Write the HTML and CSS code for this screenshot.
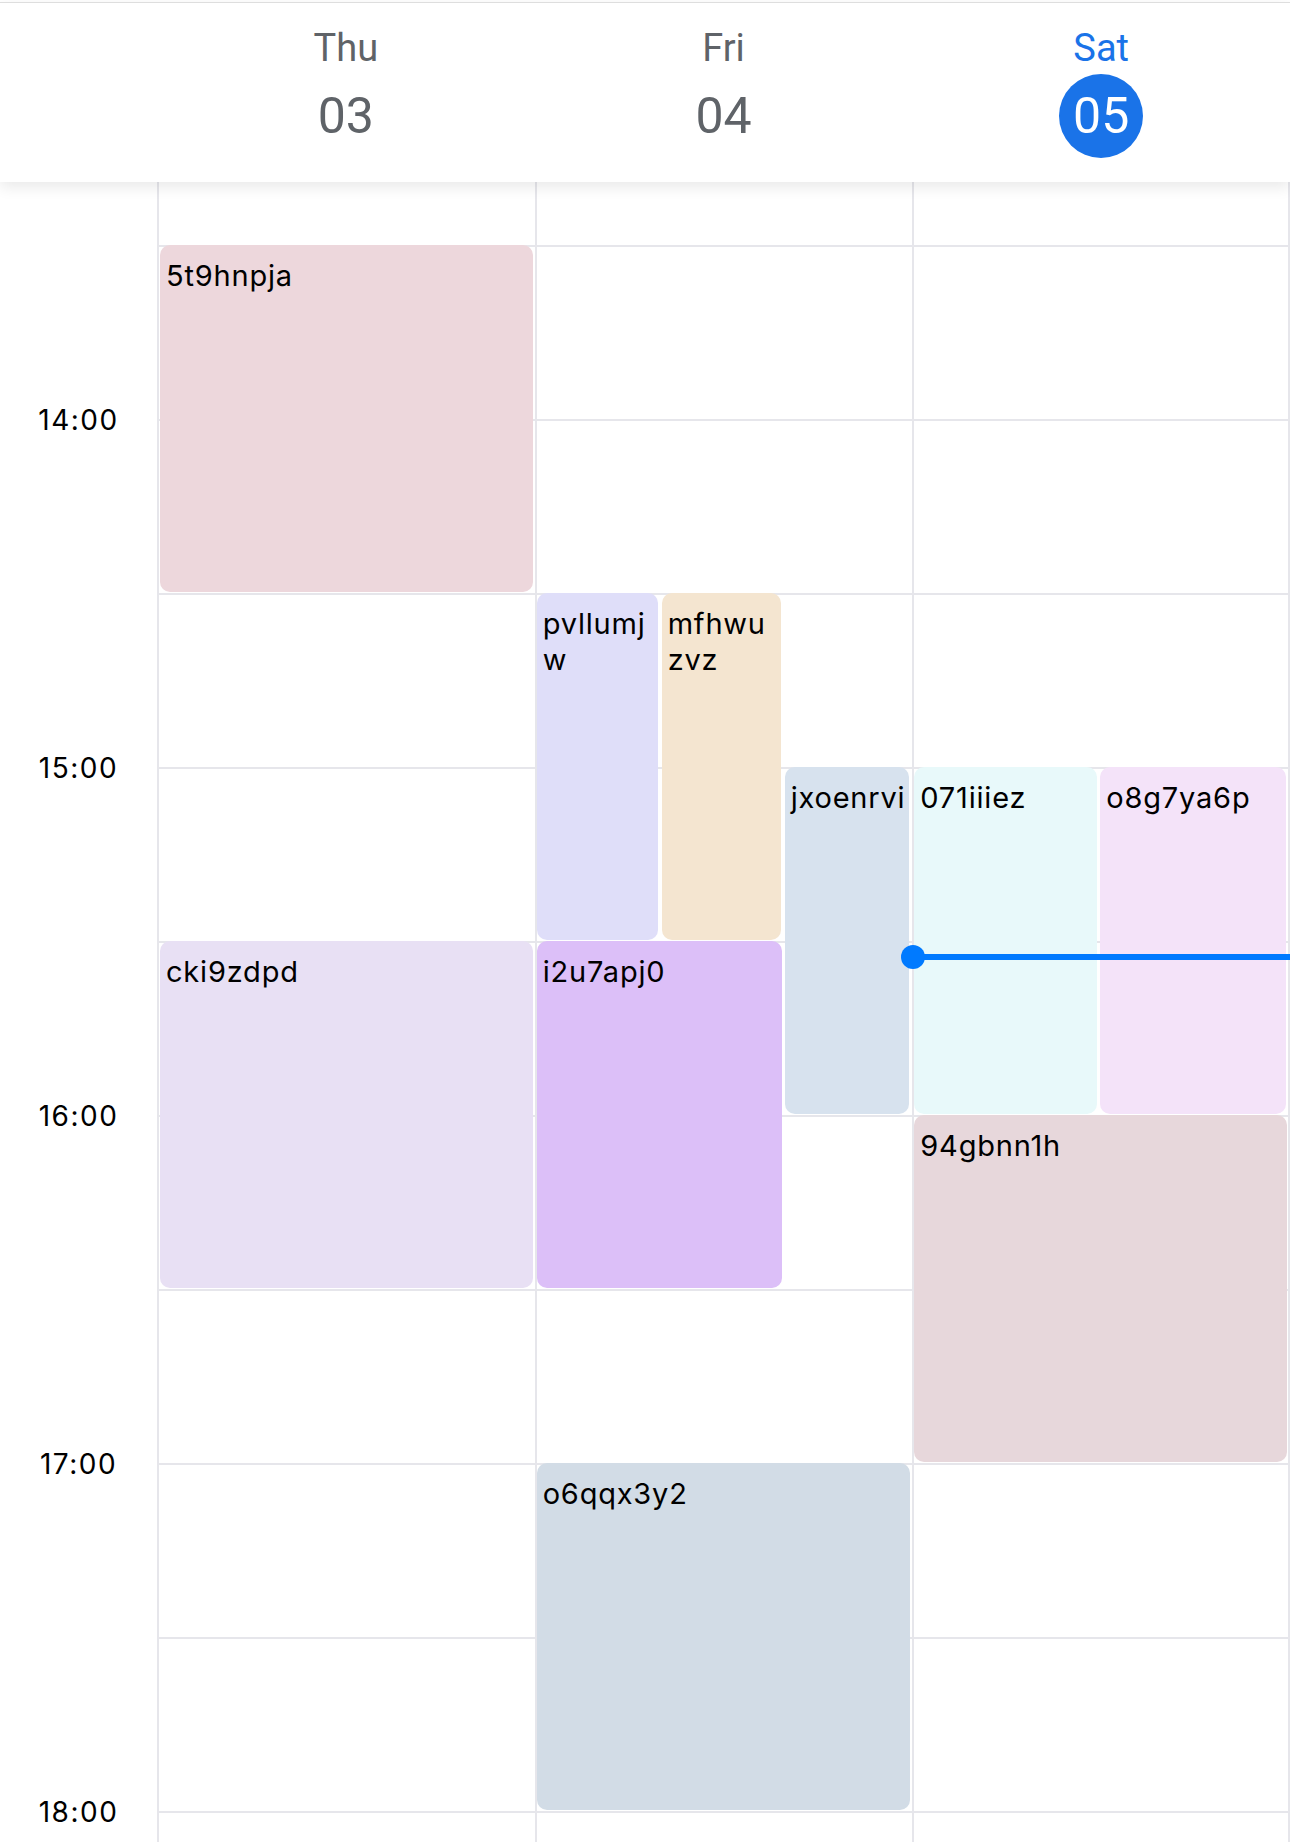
FILE: index.html
```html
<!DOCTYPE html>
<html lang="en">
<head>
    <meta charset="UTF-8">
    <meta name="viewport" content="width=device-width, initial-scale=1.0">
    <title>Week view</title>
    <link rel="stylesheet" href="styles.css">
</head>
<body>
    <div class="app">
        <!-- Day header -->
        <div class="week-header">
            <div class="gutter-head"></div>
            <div class="day-head">
                <div class="day-name">Thu</div>
                <div class="day-date">03</div>
            </div>
            <div class="day-head">
                <div class="day-name">Fri</div>
                <div class="day-date">04</div>
            </div>
            <div class="day-head today">
                <div class="day-name">Sat</div>
                <div class="day-date">05</div>
            </div>
        </div>

        <!-- Time grid -->
        <div class="week-body">
            <div class="time-gutter">
                <div class="time-label">14:00</div>
                <div class="time-label">15:00</div>
                <div class="time-label">16:00</div>
                <div class="time-label">17:00</div>
                <div class="time-label">18:00</div>
            </div>

            <div class="day-col">
                <div class="slot"></div><div class="slot"></div><div class="slot"></div><div class="slot"></div><div class="slot"></div>
                <div class="slot"></div><div class="slot"></div><div class="slot"></div><div class="slot"></div><div class="slot"></div>

                <div class="event ev-pink" style="top: 63px; height: 347px; left: 1px; width: 373px;">5t9hnpja</div>
                <div class="event ev-lilac" style="top: 759px; height: 347px; left: 1px; width: 373px;">cki9zdpd</div>
            </div>

            <div class="day-col">
                <div class="slot"></div><div class="slot"></div><div class="slot"></div><div class="slot"></div><div class="slot"></div>
                <div class="slot"></div><div class="slot"></div><div class="slot"></div><div class="slot"></div><div class="slot"></div>

                <div class="event ev-periwinkle" style="top: 411px; height: 347px; left: 0; width: 121px;">pvllumj<wbr>w</div>
                <div class="event ev-sand" style="top: 411px; height: 347px; left: 125px; width: 119px;">mfhwu<wbr>zvz</div>
                <div class="event ev-steel" style="top: 585px; height: 347px; left: 248px; width: 124px;">jxoenrvi</div>
                <div class="event ev-violet" style="top: 759px; height: 347px; left: 0; width: 245px;">i2u7apj0</div>
                <div class="event ev-slate" style="top: 1281px; height: 347px; left: 0; width: 373px;">o6qqx3y2</div>
            </div>

            <div class="day-col last">
                <div class="slot"></div><div class="slot"></div><div class="slot"></div><div class="slot"></div><div class="slot"></div>
                <div class="slot"></div><div class="slot"></div><div class="slot"></div><div class="slot"></div><div class="slot"></div>

                <div class="event ev-mint" style="top: 585px; height: 347px; left: 0; width: 183px;">071iiiez</div>
                <div class="event ev-orchid" style="top: 585px; height: 347px; left: 186px; width: 186px;">o8g7ya6p</div>
                <div class="event ev-rose" style="top: 933px; height: 347px; left: 0; width: 373px;">94gbnn1h</div>

                <!-- Current time -->
                <div class="now-line" style="top: 772px;"></div>
            </div>
        </div>
    </div>
</body>
</html>
```

FILE: styles.css
```css
html, body {
    margin: 0;
    padding: 0;
    background: #fff;
}

.app {
    width: 1290px;
    height: 1842px;
    padding-top: 2px;
    box-sizing: border-box;
    overflow: hidden;
}

/* Header */
.week-header {
    position: relative;
    z-index: 5;
    display: flex;
    height: 180px;
    box-sizing: border-box;
    padding-top: 23px;
    border-top: 1px solid #dedede;
    background: #fff;
    box-shadow: 0 5px 14px rgba(0, 0, 0, 0.09);
    font-family: Roboto, "Liberation Sans", sans-serif;
    color: #5f6368;
}

.gutter-head {
    width: 157px;
    flex: none;
}

.day-head {
    flex: 1;
    display: flex;
    flex-direction: column;
    align-items: center;
}

.day-name {
    font-size: 38px;
    line-height: 44px;
    margin-bottom: 4px;
}

.day-date {
    width: 84px;
    height: 84px;
    border-radius: 50%;
    font-size: 50px;
    line-height: 84px;
    text-align: center;
}

.today .day-name {
    color: #1a73e8;
}

.today .day-date {
    background: #1a73e8;
    color: #fff;
}

/* Grid */
.week-body {
    display: grid;
    grid-template-columns: 157px repeat(3, 1fr);
    height: 1660px;
    overflow: hidden;
    font-family: Inter, "Noto Sans", sans-serif;
}

.time-gutter {
    padding-top: 220px;
}

.time-label {
    height: 348px;
    font-size: 28px;
    line-height: 36px;
    letter-spacing: 1.5px;
    text-align: center;
    color: #000;
}

.day-col {
    position: relative;
    border-left: 2px solid #e6e6eb;
    padding-top: 63px;
}

.day-col.last {
    border-right: 2px solid #e6e6eb;
}

.slot {
    height: 174px;
    box-sizing: border-box;
    border-top: 2px solid #e6e6eb;
}

.event {
    position: absolute;
    box-sizing: border-box;
    padding: 13px 0 0 6px;
    border-radius: 10px;
    font-size: 29px;
    line-height: 36px;
    letter-spacing: 0.8px;
    color: #000;
    overflow-wrap: anywhere;
    overflow: hidden;
}

.ev-pink { background: #edd7dc; }
.ev-lilac { background: #e8e0f4; }
.ev-periwinkle { background: #dfdef9; }
.ev-sand { background: #f4e5d0; }
.ev-steel { background: #d7e2ee; }
.ev-violet { background: #dcbff8; }
.ev-slate { background: #d2dce6; }
.ev-mint { background: #e8f9fa; }
.ev-orchid { background: #f4e3f9; }
.ev-rose { background: #e7d7db; }

.now-line {
    position: absolute;
    left: -1px;
    right: -2px;
    height: 6px;
    background: #007aff;
}

.now-line::before {
    content: "";
    position: absolute;
    left: -12px;
    top: -9px;
    width: 24px;
    height: 24px;
    border-radius: 50%;
    background: #007aff;
}
```
